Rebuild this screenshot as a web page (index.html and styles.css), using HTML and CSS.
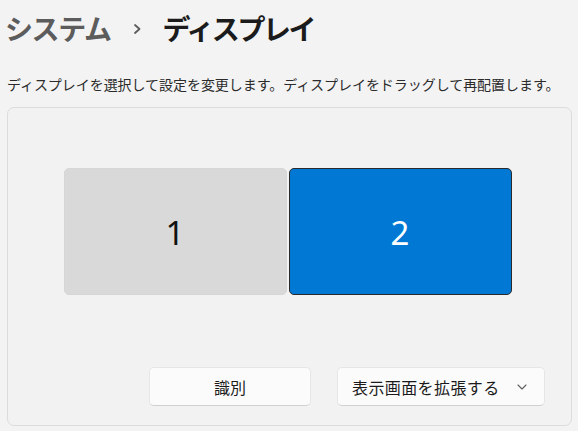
FILE: index.html
```html
<!DOCTYPE html>
<html lang="ja">
<head>
    <meta charset="UTF-8">
    <meta name="viewport" content="width=device-width, initial-scale=1.0">
    <title>ディスプレイ</title>
    <link rel="stylesheet" href="styles.css">
</head>
<body>
    <div class="page">
        <h1 class="breadcrumb">
            <span class="crumb-parent">システム</span>
            <svg class="crumb-sep" width="10" height="12" viewBox="0 0 10 12">
                <path d="M3 2 L7.5 6 L3 10" fill="none" stroke="#5c5c5c" stroke-width="1.8" stroke-linecap="round" stroke-linejoin="round"/>
            </svg>
            <span class="crumb-current">ディスプレイ</span>
        </h1>

        <p class="description">ディスプレイを選択して設定を変更します。ディスプレイをドラッグして再配置します。</p>

        <div class="arrange-panel">
            <div class="monitors">
                <div class="monitor">1</div>
                <div class="monitor selected">2</div>
            </div>

            <div class="actions">
                <button class="btn">識別</button>
                <button class="btn dropdown">
                    <span>表示画面を拡張する</span>
                    <svg class="chevron" width="12" height="8" viewBox="0 0 12 8">
                        <path d="M2 2 L6 6 L10 2" fill="none" stroke="#606060" stroke-width="1.1" stroke-linecap="round" stroke-linejoin="round"/>
                    </svg>
                </button>
            </div>
        </div>
    </div>
</body>
</html>
```

FILE: styles.css
```css
* {
    margin: 0;
    padding: 0;
    box-sizing: border-box;
}

body {
    font-family: "Noto Sans CJK JP", "Noto Sans", sans-serif;
    background: #f3f3f3;
    color: #1b1b1b;
    overflow: hidden;
}

.page {
    padding: 0 6px 0 7px;
}

/* Breadcrumb title */
.breadcrumb {
    display: flex;
    align-items: center;
    height: 56px;
    margin-left: -3px;
    font-size: 28px;
    font-weight: 700;
    letter-spacing: -2.4px;
    line-height: 1;
}

.crumb-parent {
    color: #5c5c5c;
    letter-spacing: -1.4px;
    padding-left: 1px;
}

.crumb-sep {
    margin: 2px 21px 0 21px;
}

.crumb-current {
    color: #1b1b1b;
}

.description {
    font-size: 14px;
    letter-spacing: -0.05px;
    color: #2b2b2b;
    line-height: 20px;
    margin-top: 18px;
    margin-bottom: 13px;
    white-space: nowrap;
}

/* Display arrangement panel */
.arrange-panel {
    border: 1px solid #dcdcdc;
    border-radius: 7px;
    background: #f2f2f2;
    height: 319px;
    padding: 60px 26px 20px;
    display: flex;
    flex-direction: column;
}

.monitors {
    display: flex;
    justify-content: center;
    gap: 2px;
    margin-left: -4px;
    height: 127px;
    margin-bottom: 72px;
}

.monitor {
    width: 223px;
    height: 127px;
    border-radius: 5px;
    background: #d9d9d9;
    border: 1px solid #d6d6d6;
    display: flex;
    align-items: center;
    justify-content: center;
    font-family: "Noto Sans", "Open Sans", sans-serif;
    font-size: 33px;
    font-weight: 400;
    color: #111;
    padding-top: 2px;
}

.monitor.selected {
    background: #0078d4;
    border-color: #2a2a2a;
    color: #fff;
}

.actions {
    display: flex;
    justify-content: flex-end;
    gap: 26px;
}

.btn {
    font-family: "Noto Sans CJK JP", sans-serif;
    font-size: 16px;
    color: #1b1b1b;
    height: 39px;
    width: 162px;
    background: #fbfbfb;
    border: 1px solid #e6e6e6;
    border-bottom-color: #d0d0d0;
    border-radius: 5px;
    display: flex;
    align-items: center;
    justify-content: center;
}

.btn.dropdown {
    width: 208px;
    justify-content: space-between;
    padding: 0 16px 0 14px;
    letter-spacing: 0.4px;
}

.chevron {
    margin-top: 1px;
}
```
